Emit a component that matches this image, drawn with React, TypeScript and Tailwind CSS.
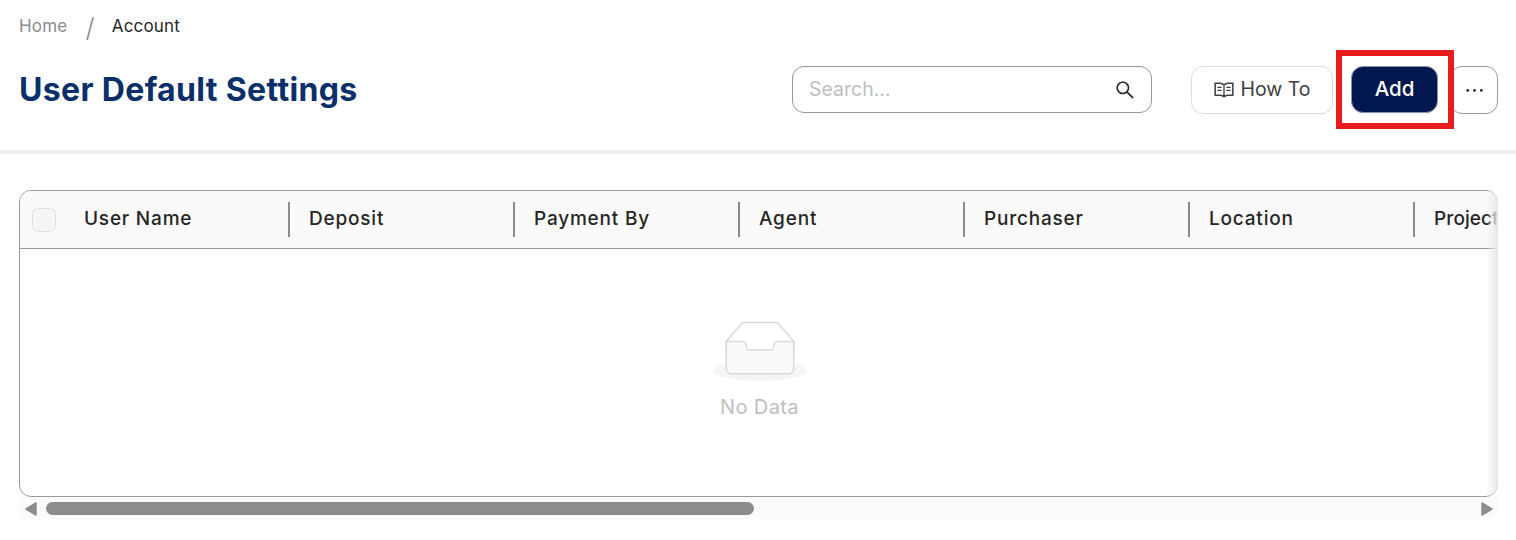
import { AiOutlineEllipsis, AiOutlineRead, AiOutlineSearch } from 'react-icons/ai';

const columns = ['User Name', 'Deposit', 'Payment By', 'Agent', 'Purchaser', 'Location', 'Project'];

function EmptyIcon() {
    return (
        <svg width="94" height="60" viewBox="0 0 64 41">
            <g transform="translate(0 1)" fill="none" fillRule="evenodd">
                <ellipse fill="#f5f5f5" cx="32" cy="33" rx="32" ry="7" />
                <g fillRule="nonzero" stroke="#d9d9d9">
                    <path d="M55 12.76L44.854 1.258C44.367.474 43.656 0 42.907 0H21.093c-.749 0-1.46.474-1.947 1.257L9 12.761V22h46v-9.24z" />
                    <path
                        d="M41.613 15.931c0-1.605.994-2.93 2.227-2.931H55v18.137C55 33.26 53.68 35 52.05 35h-40.1C10.32 35 9 33.259 9 31.137V13h11.16c1.233 0 2.227 1.323 2.227 2.928v.022c0 1.605 1.005 2.901 2.237 2.901h14.752c1.232 0 2.237-1.308 2.237-2.913v-.007z"
                        fill="#fafafa"
                    />
                </g>
            </g>
        </svg>
    );
}

export default function App() {
    return (
        <div className="h-[540px] bg-white overflow-hidden font-['Inter',sans-serif]">
            {/* Header */}
            <header className="h-[154px] border-b-4 border-[#f2f2f2] pl-[19px] pr-[18px] pt-[14px]">
                <div className="flex items-center h-[26px] text-[17px] tracking-[0.2px]">
                    <span className="text-[#8c8c8c]">Home</span>
                    <span className="text-[#8c8c8c] text-[26px] font-light ml-[18px] mr-[17px]">/</span>
                    <span className="text-[#262626]">Account</span>
                </div>
                <div className="flex items-center mt-[26px]">
                    <h1 className="text-[32px] font-bold text-[#0a2f6b] leading-none tracking-[0.35px]">User Default Settings</h1>
                    <div className="ml-auto flex items-start">
                        <div className="w-[360px] h-[47px] border border-[#999] rounded-xl flex items-center justify-between pl-4 pr-[15px] mr-[39px]">
                            <span className="text-[#bfbfbf] text-[19.5px]">Search...</span>
                            <AiOutlineSearch size={22} className="text-[#262626]" />
                        </div>
                        <button className="w-[142px] h-[48px] border border-[#dedede] rounded-xl flex items-center justify-center gap-[5px] text-[#404040] text-[19.5px] shadow-[0_2px_0_rgba(0,0,0,0.02)] mr-[18px]">
                            <AiOutlineRead size={22} />
                            How To
                        </button>
                        <div className="relative mr-[12px]">
                            <button className="block w-[87px] h-[47px] bg-[#00174f] border border-[#8c94a8] rounded-xl text-white text-[20.5px] font-medium shadow-[0_2px_0_rgba(0,0,0,0.04)]">
                                Add
                            </button>
                            <div className="absolute z-10 -top-4 -left-[15px] -right-[16px] -bottom-4 border-[6px] border-[#e81c1c]"></div>
                        </div>
                        <button className="w-[48px] h-[48px] border border-[#999] rounded-xl flex items-center justify-center text-[#262626]">
                            <AiOutlineEllipsis size={25} />
                        </button>
                    </div>
                </div>
            </header>

            {/* Table */}
            <div className="relative mx-[19px] mt-9 w-[1479px]">
                <div className="h-[307px] border border-[#999] rounded-xl overflow-hidden flex flex-col">
                    <div className="flex h-[58px] shrink-0 bg-[#fafafa] border-b border-[#999]">
                        <div className="w-[45px] shrink-0 pl-3 flex items-center">
                            <div className="w-6 h-6 rounded-md bg-[#f5f5f5] border border-[#e0e0e0]"></div>
                        </div>
                        {columns.map((col, i) => (
                            <div key={col} className="w-[225px] shrink-0 flex items-center relative pl-[19px]">
                                <span className={`text-[#262626] text-[19px] font-medium whitespace-nowrap ${i === columns.length - 1 ? 'tracking-[0.1px]' : 'tracking-[0.8px]'}`}>{col}</span>
                                {i < columns.length - 1 && (
                                    <div className="absolute right-0 top-[11px] w-0.5 h-[35px] bg-[#8c8c8c]"></div>
                                )}
                            </div>
                        ))}
                    </div>
                    <div className="flex-1 flex flex-col items-center pt-[72px] pl-[2px]">
                        <EmptyIcon />
                        <div className="text-[#bfbfbf] text-[20px] tracking-[0.4px] mt-[14px] leading-6">No Data</div>
                    </div>
                </div>

                {/* Scroll shadow */}
                <div className="absolute top-0 right-0 w-[12px] h-[307px] rounded-r-xl bg-gradient-to-l from-[#e8e8e8] to-transparent"></div>

                {/* Scrollbar */}
                <div className="h-[23px] bg-[#fbfbfb] rounded-b-xl flex items-center relative">
                    <svg width="12" height="14" viewBox="0 0 12 14" className="ml-[6px] text-[#8c8c8c]">
                        <path d="M11 1 L1 7 L11 13 Z" fill="currentColor" stroke="currentColor" strokeWidth="1.5" strokeLinejoin="round" />
                    </svg>
                    <div className="ml-[9px] w-[708px] h-[13px] rounded-full bg-[#8c8c8c]"></div>
                    <svg width="12" height="14" viewBox="0 0 12 14" className="ml-auto mr-[5px] text-[#8c8c8c]">
                        <path d="M1 1 L11 7 L1 13 Z" fill="currentColor" stroke="currentColor" strokeWidth="1.5" strokeLinejoin="round" />
                    </svg>
                </div>
            </div>
        </div>
    );
}
